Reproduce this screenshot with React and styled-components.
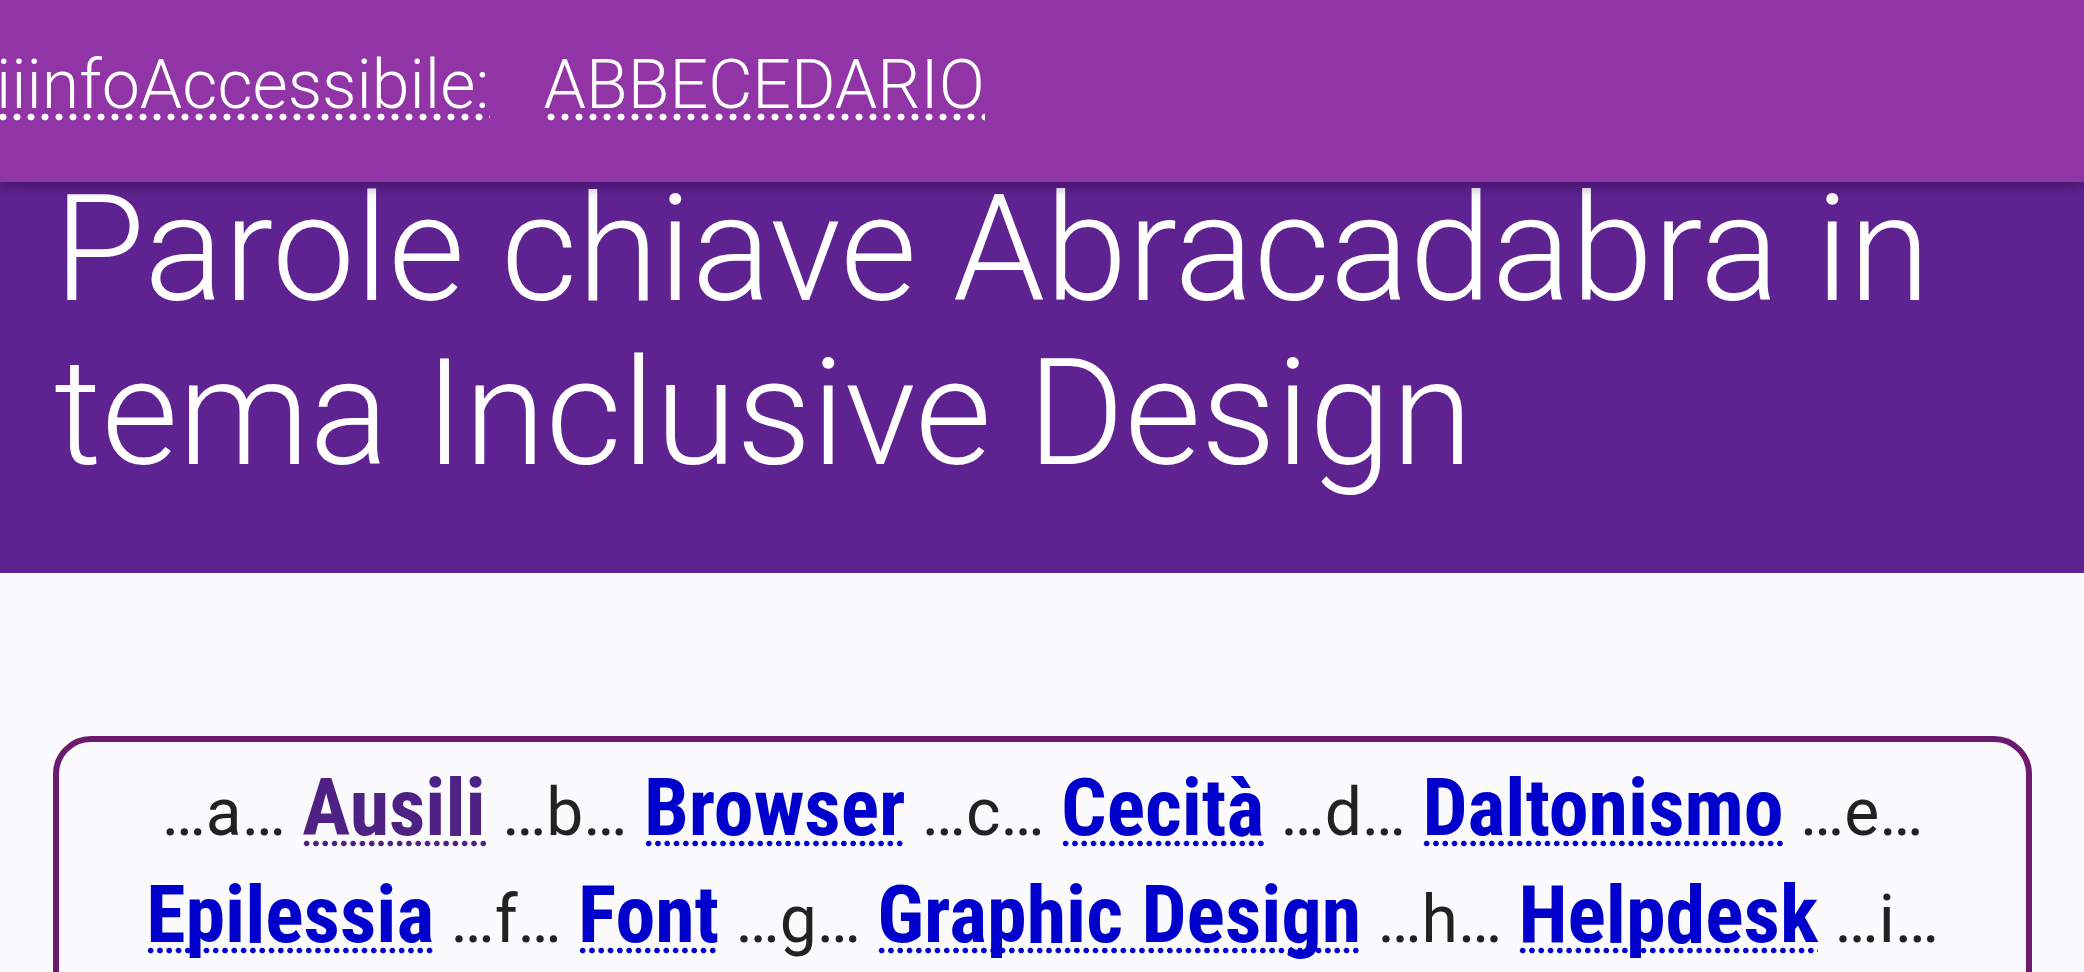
import React from 'react';
import styled, { createGlobalStyle, css } from 'styled-components';

const GlobalStyle = createGlobalStyle`
  html, body {
    margin: 0;
    padding: 0;
    background: #fbfafc;
    font-family: Roboto, "Noto Sans", "Liberation Sans", sans-serif;
    overflow: hidden;
  }
`;

// sottolineatura a puntini (pallini tondi come nello screenshot)
const dotted = (r, gap, bottom) => css`
    text-decoration: none;
    background-image: radial-gradient(circle, currentColor ${r}px, transparent ${r + 0.7}px);
    background-size: ${gap}px ${2 * r + 2}px;
    background-repeat: repeat-x;
    background-position: left 0 bottom ${bottom}px;
`;

const rows = [
    [
        { letter: 'a', word: 'Ausili', visited: true },
        { letter: 'b', word: 'Browser' },
        { letter: 'c', word: 'Cecità' },
        { letter: 'd', word: 'Daltonismo' },
        { letter: 'e' },
    ],
    [
        { word: 'Epilessia' },
        { letter: 'f', word: 'Font' },
        { letter: 'g', word: 'Graphic Design' },
        { letter: 'h', word: 'Helpdesk' },
        { letter: 'i' },
    ],
    [
        { word: 'Inclusive Design' },
        { letter: 'l', word: 'Leggibilità' },
        { letter: 'm', word: 'Mouse' },
    ],
];

const App = () => {
    return (
        <>
            <GlobalStyle />
            <Header>
                <Nav>
                    <NavLink href="#">iiinfoAccessibile:</NavLink>
                    <NavLink href="#">ABBECEDARIO</NavLink>
                </Nav>
            </Header>
            <Hero>
                <Titolo>Parole chiave Abracadabra in tema Inclusive Design</Titolo>
            </Hero>
            <Main>
                <Indice>
                    {rows.map((row, i) => (
                        <Riga key={i}>
                            {row.map((item, j) => (
                                <React.Fragment key={j}>
                                    {item.letter && <Lettera>…{item.letter}…</Lettera>}
                                    {item.letter && item.word && ' '}
                                    {item.word && <Voce href="#" $visited={item.visited}>{item.word}</Voce>}
                                    {j < row.length - 1 && ' '}
                                </React.Fragment>
                            ))}
                        </Riga>
                    ))}
                </Indice>
            </Main>
        </>
    );
};

export default App;

const Header = styled.header`
    position: fixed;
    top: 0;
    left: 0;
    right: 0;
    z-index: 10;
    height: 182px;
    box-sizing: border-box;
    padding-top: 45px;
    background: #9134a6;
    box-shadow: 0 3px 14px rgba(40, 0, 60, 0.55);
`;

const Nav = styled.nav`
    display: flex;
    gap: 54px;
    margin-left: -4px;
`;

const NavLink = styled.a`
    font-family: Roboto, "Liberation Sans", sans-serif;
    font-weight: 300;
    font-size: 68px;
    line-height: normal;
    color: #ffffff;
    white-space: nowrap;
    ${dotted(3.2, 14, 4)}
`;

const Hero = styled.section`
    background: #5e2391;
    padding: 168px 54px 77px 54px;
`;

const Titolo = styled.h1`
    margin: 0;
    font-family: Roboto, "Liberation Sans", sans-serif;
    font-weight: 300;
    font-size: 148px;
    line-height: 164px;
    color: #ffffff;
`;

const Main = styled.main`
    padding: 163px 52px 0 53px;
`;

const Indice = styled.div`
    border: 6px solid #6c1a6f;
    border-radius: 38px;
    padding: 17px 30px 40px 30px;
    background: #fbfafc;
`;

const Riga = styled.div`
    text-align: center;
    white-space: nowrap;
    font-size: 66px;
    line-height: 107px;
    color: #222222;
`;

const Lettera = styled.span`
    font-weight: 400;
`;

const Voce = styled.a`
    font-weight: 700;
    font-size: 80px;
    line-height: 80px;
    font-stretch: 87.5%;
    color: ${(p) => (p.$visited ? '#4e2184' : '#0000cc')};
    ${dotted(2.4, 9.3, 8)}
`;
